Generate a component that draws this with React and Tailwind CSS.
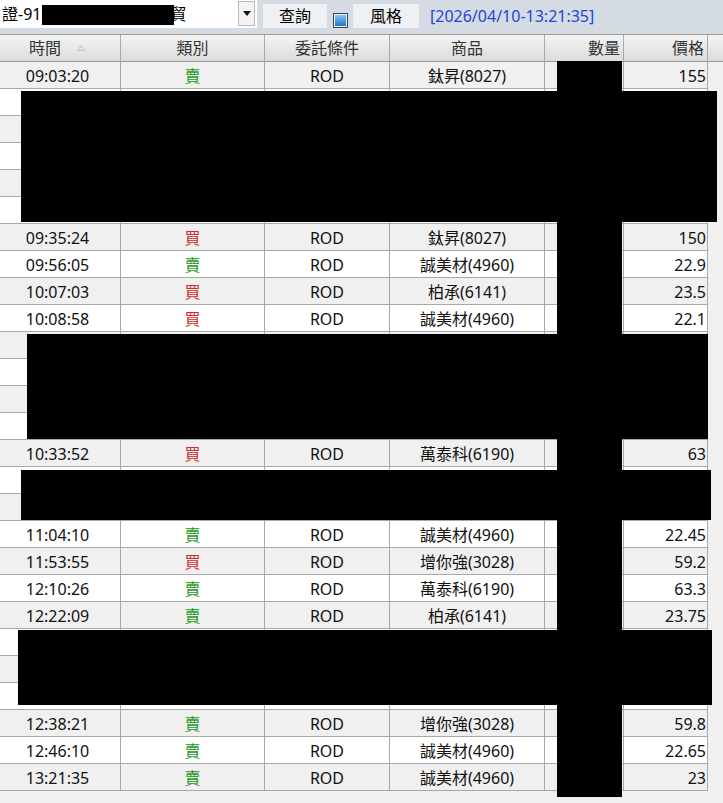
const rows = [
  { t: '09:03:20', s: '賣', p: '鈦昇(8027)', v: '155' },
  null, null, null, null, null,
  { t: '09:35:24', s: '買', p: '鈦昇(8027)', v: '150' },
  { t: '09:56:05', s: '賣', p: '誠美材(4960)', v: '22.9' },
  { t: '10:07:03', s: '買', p: '柏承(6141)', v: '23.5' },
  { t: '10:08:58', s: '買', p: '誠美材(4960)', v: '22.1' },
  null, null, null, null,
  { t: '10:33:52', s: '買', p: '萬泰科(6190)', v: '63' },
  null, null,
  { t: '11:04:10', s: '賣', p: '誠美材(4960)', v: '22.45' },
  { t: '11:53:55', s: '買', p: '增你強(3028)', v: '59.2' },
  { t: '12:10:26', s: '賣', p: '萬泰科(6190)', v: '63.3' },
  { t: '12:22:09', s: '賣', p: '柏承(6141)', v: '23.75' },
  null, null, null,
  { t: '12:38:21', s: '賣', p: '增你強(3028)', v: '59.8' },
  { t: '12:46:10', s: '賣', p: '誠美材(4960)', v: '22.65' },
  { t: '13:21:35', s: '賣', p: '誠美材(4960)', v: '23' },
];

function TopBar() {
  return (
    <div className="h-[34px] bg-[#d5dbe3] flex items-start">
      {/* account combo */}
      <div className="w-[257px] h-[28px] bg-white flex items-center relative">
        <span className="pl-[2px] text-[16px] text-black">證-91</span>
        <span className="ml-[129px] text-[16px] text-black">貿</span>
        <div className="absolute right-[2px] top-[1px] w-[17px] h-[25px] bg-[#f3f3f3] border border-[#b8b8b8] flex items-center justify-center">
          <svg width="8" height="5" viewBox="0 0 8 5"><path d="M0 0h8L4 5z" fill="#111" /></svg>
        </div>
      </div>
      <div className="ml-[6px] mt-[4px] w-[64px] h-[24px] bg-[#eef0f3] flex items-center justify-center text-[16px] text-black">
        查詢
      </div>
      <div className="ml-[6px] mt-[13px] w-[15px] h-[15px] border border-[#444] bg-[#e8eef5] p-[1px]">
        <div className="w-full h-full bg-gradient-to-b from-[#7cc8f4] to-[#1d77c9]" />
      </div>
      <div className="ml-[5px] mt-[4px] w-[66px] h-[24px] bg-[#eef0f3] flex items-center justify-center text-[16px] text-black">
        風格
      </div>
      <div className="ml-[11px] mt-[4px] h-[24px] flex items-center text-[16px] text-[#2446d6]">
        [2026/04/10-13:21:35]
      </div>
    </div>
  );
}

const widths = ['w-[121px]', 'w-[144px]', 'w-[125px]', 'w-[155px]', 'w-[79px]', 'w-[84px]'];

function Header() {
  const cell = 'h-full border-r border-[#a8a8a8] flex items-center text-[16px] text-[#333]';
  return (
    <div className="h-[28px] flex border-t border-b border-[#9a9a9a] bg-gradient-to-b from-[#f4f4f4] to-[#dcdcdc]">
      <div className={`${widths[0]} ${cell} justify-start pl-[29px] gap-[16px]`}>
        <span>時間</span>
        <svg width="8" height="6" viewBox="0 0 8 6">
          <path d="M4 0.5L7.5 5.5H0.5z" fill="none" stroke="#c4c4c4" />
        </svg>
      </div>
      <div className={`${widths[1]} ${cell} justify-center`}>類別</div>
      <div className={`${widths[2]} ${cell} justify-center`}>委託條件</div>
      <div className={`${widths[3]} ${cell} justify-center`}>商品</div>
      <div className={`${widths[4]} ${cell} justify-end pr-[3px]`}>數量</div>
      <div className={`${widths[5]} ${cell} justify-end pr-[3px]`}>價格</div>
      <div className="flex-1" />
    </div>
  );
}

function Row({ r, i }) {
  const bg = i % 2 === 0 ? 'bg-[#f0f0f0]' : 'bg-white';
  const cell = 'h-full border-r border-[#a8a8a8] flex items-center pt-[1px] text-[16px] text-[#111]';
  return (
    <div className="h-[27px] flex">
      <div className={`flex border-b border-[#a8a8a8] ${bg}`}>
        <div className={`${widths[0]} ${cell} justify-center`}>
          <span className="-ml-[5px]">{r ? r.t : ''}</span>
        </div>
        <div className={`${widths[1]} ${cell} justify-center`}>
          {r && (
            <span className={r.s === '賣' ? 'text-[#1f9a24]' : 'text-[#d42a2a]'}>{r.s}</span>
          )}
        </div>
        <div className={`${widths[2]} ${cell} justify-center`}>{r ? 'ROD' : ''}</div>
        <div className={`${widths[3]} ${cell} justify-center`}>{r ? r.p : ''}</div>
        <div className={`${widths[4]} ${cell}`} />
        <div className={`${widths[5]} ${cell} justify-end pr-[1px]`}>{r ? r.v : ''}</div>
      </div>
      <div className="flex-1 bg-[#f0f0f0]" />
    </div>
  );
}

export default function App() {
  return (
    <div className="relative w-[723px] h-[803px] overflow-hidden bg-[#f0f0f0] font-['Noto_Sans','Noto_Sans_CJK_TC',sans-serif] leading-none">
      <TopBar />
      <Header />
      <div className="flex flex-col">
        {rows.map((r, i) => (
          <Row key={i} r={r} i={i} />
        ))}
      </div>

      {/* redaction overlays */}
      <div className="absolute left-[42px] top-[5px] w-[132px] h-[20px] bg-black" />
      <div className="absolute left-[557px] top-[61px] w-[65px] h-[736px] bg-black" />
      <div className="absolute left-[21px] top-[91px] w-[696px] h-[131px] bg-black" />
      <div className="absolute left-[27px] top-[334px] w-[681px] h-[105px] bg-black" />
      <div className="absolute left-[21px] top-[470px] w-[690px] h-[50px] bg-black" />
      <div className="absolute left-[18px] top-[630px] w-[694px] h-[75px] bg-black" />
    </div>
  );
}
